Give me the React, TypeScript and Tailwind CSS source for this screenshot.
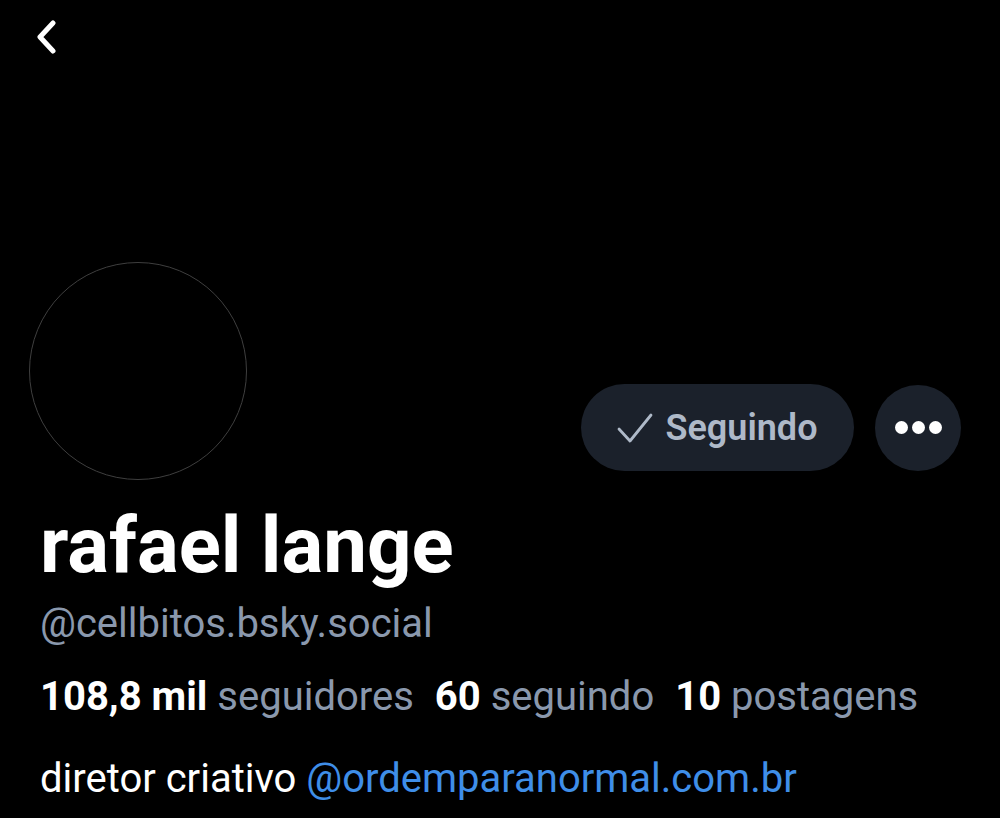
import React from "react";

export default function App() {
  return (
    <div
      className="w-[1000px] h-[818px] bg-black text-white overflow-hidden"
      style={{ fontFamily: "Roboto, 'Noto Sans', sans-serif" }}
    >
      <div className="pl-[35px] pt-[20px] h-[262px]">
        <svg width="24" height="34" viewBox="0 0 24 34" fill="none">
          <path d="M18 3 L5 17 L18 31" stroke="white" strokeWidth="5" strokeLinecap="round" strokeLinejoin="round" />
        </svg>
      </div>
      <div className="flex items-end justify-between pl-[29px] pr-[39px]">
        <div className="w-[218px] h-[218px] rounded-full border border-[#3f3f3f]" />
        <div className="flex items-center gap-[21px] mb-[9px]">
          <button className="h-[87px] w-[273px] rounded-full bg-[#1b212b] flex items-center justify-center gap-[12px] text-[#aeb9c8] text-[36px] font-semibold">
            <svg width="36" height="32" viewBox="0 0 36 32" fill="none">
              <path d="M2 17 L13 29 L34 3" stroke="#aeb9c8" strokeWidth="2.8" strokeLinecap="round" strokeLinejoin="round" />
            </svg>
            <span>Seguindo</span>
          </button>
          <button className="h-[86px] w-[86px] rounded-full bg-[#1b212b] flex items-center justify-center gap-[4px]">
            <span className="w-[13px] h-[13px] rounded-full bg-white" />
            <span className="w-[13px] h-[13px] rounded-full bg-white" />
            <span className="w-[13px] h-[13px] rounded-full bg-white" />
          </button>
        </div>
      </div>
      <div className="pl-[40px] pt-[21px]">
        <div className="text-[78px] font-bold leading-[90px]">rafael lange</div>
        <div className="text-[40px] leading-[46px] mt-[10px] text-[#8a98ad]">@cellbitos.bsky.social</div>
        <div className="text-[40px] leading-[46px] mt-[27px] flex gap-[21px]">
          <span><span className="font-bold text-white">108,8 mil</span> <span className="text-[#8a98ad]">seguidores</span></span>
          <span><span className="font-bold text-white">60</span> <span className="text-[#8a98ad]">seguindo</span></span>
          <span><span className="font-bold text-white">10</span> <span className="text-[#8a98ad]">postagens</span></span>
        </div>
        <div className="text-[40px] leading-[46px] mt-[36px]">
          diretor criativo <span className="text-[#3f8ee8]">@ordemparanormal.com.br</span>
        </div>
      </div>
    </div>
  );
}
